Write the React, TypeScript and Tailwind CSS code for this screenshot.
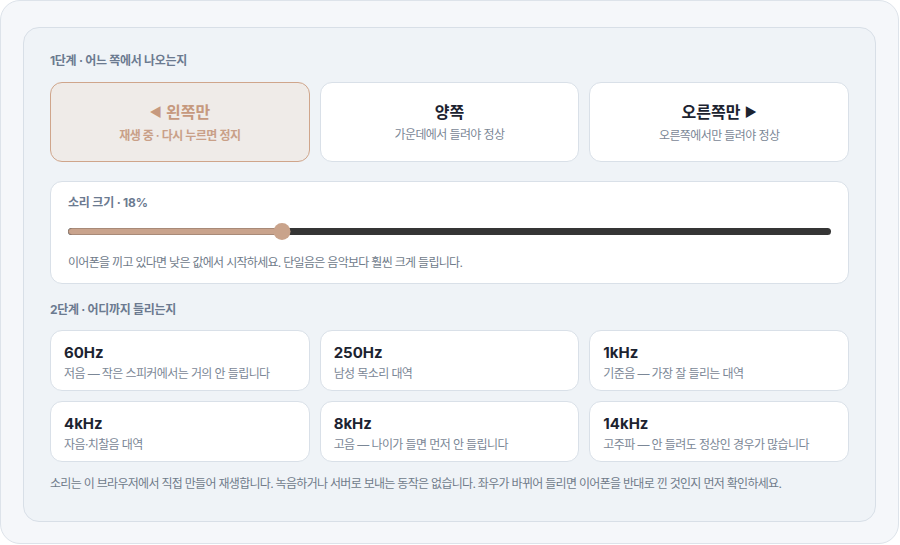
import React from "react";

const font = { fontFamily: "Inter, 'Noto Sans CJK KR', sans-serif" };

type Side = { title: React.ReactNode; sub: string; active?: boolean };

const sides: Side[] = [
  {
    title: (
      <>
        <span className="text-[13px] mr-[4px] relative top-[-1px]">◀</span>왼쪽만
      </>
    ),
    sub: "재생 중 · 다시 누르면 정지",
    active: true,
  },
  { title: "양쪽", sub: "가운데에서 들려야 정상" },
  {
    title: (
      <>
        오른쪽만<span className="text-[13px] ml-[4px] relative top-[-1px]">▶</span>
      </>
    ),
    sub: "오른쪽에서만 들려야 정상",
  },
];

const freqs = [
  { hz: "60Hz", desc: "저음 — 작은 스피커에서는 거의 안 들립니다" },
  { hz: "250Hz", desc: "남성 목소리 대역" },
  { hz: "1kHz", desc: "기준음 — 가장 잘 들리는 대역" },
  { hz: "4kHz", desc: "자음·치찰음 대역" },
  { hz: "8kHz", desc: "고음 — 나이가 들면 먼저 안 들립니다" },
  { hz: "14kHz", desc: "고주파 — 안 들려도 정상인 경우가 많습니다" },
];

export default function App() {
  const fill = 28;
  return (
    <div className="w-[900px] h-[545px] bg-white" style={font}>
      <div className="w-[899px] h-[544px] rounded-[20px] border border-[#dde3ea] bg-[#f5f7fa] pt-[26px] pl-[22px] pr-[22px]">
        <div className="w-[853px] h-[495px] rounded-[16px] border border-[#d8dfe7] bg-[#eff3f7] px-[26px] pt-[25px]">
          <div className="text-[12px] leading-[16px] font-bold tracking-[-0.3px] text-[#6b7a90]">
            1단계 · 어느 쪽에서 나오는지
          </div>

          <div className="mt-[13px] grid grid-cols-3 gap-[10px]">
            {sides.map((s, i) => (
              <div
                key={i}
                className={
                  s.active
                    ? "h-[80px] rounded-[12px] border border-[#cfa58b] bg-[#efebe8] flex flex-col items-center justify-center"
                    : "h-[80px] rounded-[12px] border border-[#d9e0e8] bg-white flex flex-col items-center justify-center"
                }
              >
                <div
                  className={
                    s.active
                      ? "text-[16px] leading-[24px] font-bold text-[#c6997e]"
                      : "text-[16px] leading-[24px] font-bold text-[#1c2330]"
                  }
                >
                  {s.title}
                </div>
                <div
                  className={
                    s.active
                      ? "mt-[2px] text-[12px] leading-[18px] font-semibold tracking-[-0.5px] text-[#c9a088]"
                      : "mt-[2px] text-[12px] leading-[18px] tracking-[-0.6px] text-[#7b8796]"
                  }
                >
                  {s.sub}
                </div>
              </div>
            ))}
          </div>

          <div className="mt-[19px] h-[103px] rounded-[12px] border border-[#d9e0e8] bg-white px-[17px] pt-[13px]">
            <div className="text-[12px] leading-[16px] font-bold tracking-[-0.2px] text-[#6b7a90]">소리 크기 · 18%</div>
            <div className="relative mt-[12px] h-[16px] flex items-center">
              <div className="h-[7px] w-full rounded-full bg-[#353535] overflow-hidden">
                <div className="h-full bg-[#c9a38c] border border-[#a88a78] rounded-l-full" style={{ width: `${fill}%` }} />
              </div>
              <div
                className="absolute top-0 w-[17px] h-[17px] rounded-full bg-[#c9a38b] -translate-x-1/2"
                style={{ left: `${fill}%` }}
              />
            </div>
            <div className="mt-[15px] text-[12px] leading-[18px] tracking-[-0.7px] text-[#6f7b8a]">
              이어폰을 끼고 있다면 낮은 값에서 시작하세요. 단일음은 음악보다 훨씬 크게 들립니다.
            </div>
          </div>

          <div className="mt-[18px] text-[12px] leading-[16px] font-bold tracking-[-0.3px] text-[#6b7a90]">
            2단계 · 어디까지 들리는지
          </div>

          <div className="mt-[12px] grid grid-cols-3 gap-[10px]">
            {freqs.map((f) => (
              <div
                key={f.hz}
                className="h-[61px] rounded-[12px] border border-[#d9e0e8] bg-white px-[13px] pt-[12px]"
              >
                <div className="text-[15px] leading-[20px] font-bold text-[#1c2330]">{f.hz}</div>
                <div className="mt-[3px] text-[12px] leading-[16px] tracking-[-0.6px] text-[#7b8796]">{f.desc}</div>
              </div>
            ))}
          </div>

          <div className="mt-[13px] text-[12px] leading-[18px] tracking-[-0.7px] text-[#6f7b8a]">
            소리는 이 브라우저에서 직접 만들어 재생합니다. 녹음하거나 서버로 보내는 동작은 없습니다. 좌우가 바뀌어 들리면 이어폰을 반대로 낀 것인지 먼저 확인하세요.
          </div>
        </div>
      </div>
    </div>
  );
}
